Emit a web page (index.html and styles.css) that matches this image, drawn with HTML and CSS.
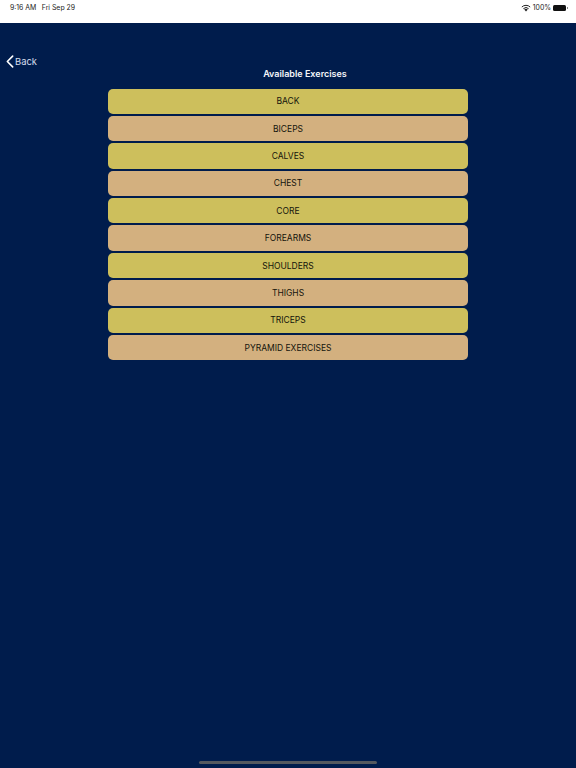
FILE: index.html
```html
<!DOCTYPE html>
<html lang="en">
<head>
    <meta charset="UTF-8">
    <meta name="viewport" content="width=device-width, initial-scale=1.0">
    <title>Available Exercises</title>
    <link rel="stylesheet" href="styles.css">
</head>
<body>
    <div class="status-bar">
        <div class="status-time">
            <span>9:16 AM</span>
            <span>Fri Sep 29</span>
        </div>
        <div class="status-right">
            <svg class="wifi" viewBox="0 0 12 9" width="10" height="8">
                <path d="M6 8.8 3.9 6.4a3 3 0 0 1 4.2 0z" fill="#222"/>
                <path d="M2.9 5.3a4.5 4.5 0 0 1 6.2 0" fill="none" stroke="#222" stroke-width="1.2"/>
                <path d="M1 3.3a7.2 7.2 0 0 1 10 0" fill="none" stroke="#222" stroke-width="1.2"/>
            </svg>
            <span>100%</span>
            <div class="battery"></div>
        </div>
    </div>

    <div class="screen">
        <a class="back" href="#">
            <svg viewBox="0 0 9 14" width="8" height="13">
                <path d="M7.5 1 1.5 7l6 6" fill="none" stroke="#fff" stroke-width="1.8" stroke-linecap="round" stroke-linejoin="round"/>
            </svg>
            <span>Back</span>
        </a>
        <h1>Available Exercises</h1>
        <div class="exercises">
            <button class="gold">BACK</button>
            <button class="tan">BICEPS</button>
            <button class="gold">CALVES</button>
            <button class="tan">CHEST</button>
            <button class="gold">CORE</button>
            <button class="tan">FOREARMS</button>
            <button class="gold">SHOULDERS</button>
            <button class="tan">THIGHS</button>
            <button class="gold">TRICEPS</button>
            <button class="tan">PYRAMID EXERCISES</button>
        </div>
        <div class="home-indicator"></div>
    </div>
</body>
</html>
```

FILE: styles.css
```css
* {
    box-sizing: border-box;
}
html, body {
    height: 100%;
}
body {
    margin: 0;
    display: flex;
    flex-direction: column;
    overflow: hidden;
    font-family: Inter, "Liberation Sans", sans-serif;
    background-color: #001c4c;
}
.status-bar {
    height: 23px;
    flex-shrink: 0;
    display: flex;
    justify-content: space-between;
    align-items: flex-start;
    padding: 3px 9px 0 10px;
    background-color: #fff;
    color: #222;
    font-size: 6.9px;
    line-height: 9px;
}
.status-time {
    display: flex;
    gap: 5.5px;
}
.status-right {
    display: flex;
    align-items: center;
    gap: 2px;
}
.battery {
    position: relative;
    width: 13px;
    height: 6px;
    margin-right: 1px;
    border-radius: 1.5px;
    background-color: #111;
}
.battery::after {
    content: "";
    position: absolute;
    right: -2px;
    top: 2px;
    width: 1px;
    height: 2px;
    background-color: #888;
}
.screen {
    flex: 1;
    position: relative;
    padding-top: 45px;
}
.back {
    position: absolute;
    left: 6px;
    top: 32px;
    display: flex;
    align-items: center;
    gap: 1px;
    color: #d5deee;
    font-size: 9.4px;
    text-decoration: none;
}
h1 {
    margin: 0 0 8.5px;
    padding-left: 34px;
    text-align: center;
    color: #f4f6fa;
    font-size: 9px;
    line-height: 12px;
    font-weight: 600;
}
.exercises {
    width: 360px;
    margin: 0 auto;
    display: flex;
    flex-direction: column;
    gap: 2px;
}
.exercises button {
    height: 25.4px;
    padding: 0;
    border: none;
    border-radius: 5px;
    color: #14140c;
    font-family: inherit;
    font-size: 8.5px;
    cursor: pointer;
}
.gold {
    background-color: #cdbf5c;
}
.tan {
    background-color: #d3b07f;
}
.home-indicator {
    position: absolute;
    left: 199px;
    bottom: 4px;
    width: 178px;
    height: 3px;
    border-radius: 2px;
    background-color: #55595f;
}
```
